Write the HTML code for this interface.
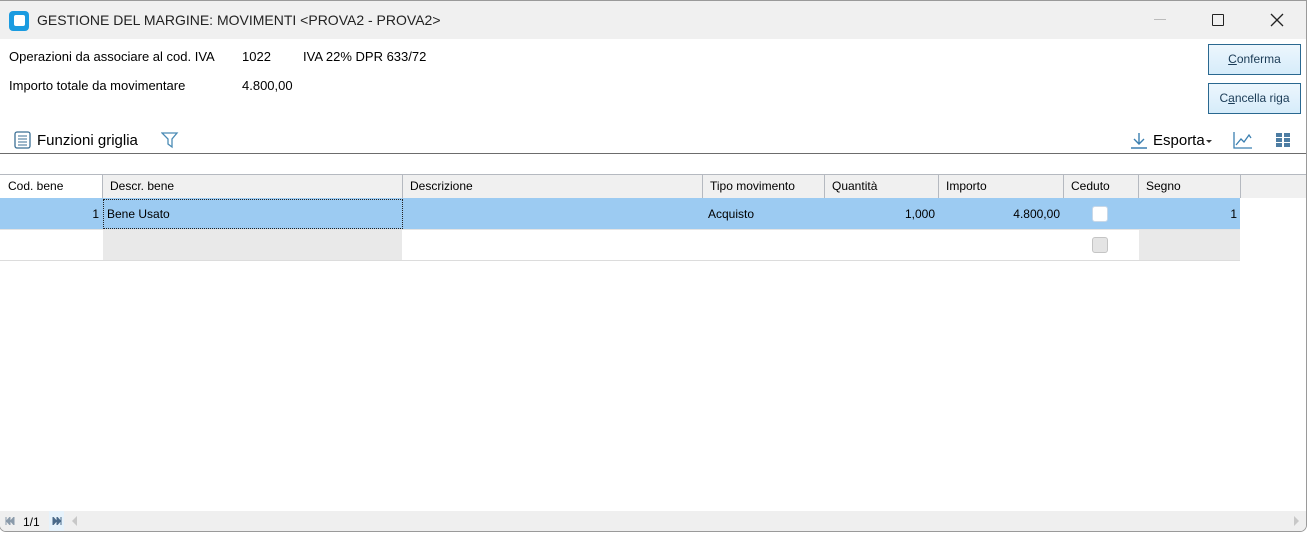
<!DOCTYPE html>
<html><head><meta charset="utf-8"><style>
*{margin:0;padding:0;box-sizing:border-box}
body{width:1308px;height:533px;background:#fff;font-family:"Liberation Sans","DejaVu Sans",sans-serif;position:relative;overflow:hidden}
.win{position:absolute;left:-1px;top:0;width:1308px;height:532px;border:1px solid #9a9a9a;border-radius:0 0 7px 7px;background:#fff;overflow:hidden}
.title{position:absolute;left:0;top:0;width:100%;height:38px;background:#f0f0f0}
.t{position:absolute;font-size:12px;color:#000;white-space:nowrap}
.btn{position:absolute;left:1208px;width:93px;height:31px;border:1px solid #2a6890;background:linear-gradient(#ecf6fd,#d6ecfa);font-size:12px;text-align:center;line-height:29px;color:#1a3b56}
.cell{position:absolute;font-size:12px;line-height:24px;padding:0 5px;white-space:nowrap}
.vl{position:absolute;width:1px;background:#b5b9c0}
</style></head><body>
<div class="win">
<div class="title">
 <div style="position:absolute;left:9px;top:10px;width:20px;height:20px;border-radius:4px;background:#1a9be0"></div>
 <div style="position:absolute;left:14px;top:14px;width:11px;height:11px;border-radius:2px;background:#fff"></div>
 <div class="t" style="left:37px;top:11px;font-size:14px;color:#222">GESTIONE DEL MARGINE: MOVIMENTI &lt;PROVA2 - PROVA2&gt;</div>
 <div style="position:absolute;left:1154px;top:18px;width:12px;height:1px;background:#bbb"></div>
 <div style="position:absolute;left:1212px;top:13px;width:12px;height:12px;border:1.5px solid #222;border-radius:1px"></div>
 <svg style="position:absolute;left:1270px;top:12px" width="14" height="14"><path d="M1 1L13 13M13 1L1 13" stroke="#222" stroke-width="1.3"/></svg>
</div>
<div class="t" style="left:9px;top:48px;font-size:13px">Operazioni da associare al cod. IVA</div>
<div class="t" style="left:242px;top:48px;font-size:13px">1022</div>
<div class="t" style="left:303px;top:48px;font-size:13px">IVA 22% DPR 633/72</div>
<div class="t" style="left:9px;top:77px;font-size:13px">Importo totale da movimentare</div>
<div class="t" style="left:242px;top:77px;font-size:13px">4.800,00</div>
<div class="btn" style="top:43px"><u>C</u>onferma</div>
<div class="btn" style="top:82px">C<u>a</u>ncella riga</div>
<svg style="position:absolute;left:14px;top:130px" width="18" height="18"><rect x="1" y="1" width="15" height="16" rx="2" fill="none" stroke="#3b6f95" stroke-width="1.3"/><path d="M4 5h9M4 8h9M4 11h9M4 14h9" stroke="#3b6f95"/></svg>
<div class="t" style="left:37px;top:131px;font-size:15px">Funzioni griglia</div>
<svg style="position:absolute;left:161px;top:130px" width="18" height="18"><path d="M1 2h15l-5 6v8l-4-3v-5z" fill="none" stroke="#4a8bb5" stroke-width="1.3"/></svg>
<svg style="position:absolute;left:1130px;top:131px" width="18" height="17"><path d="M9 1v11M4 7l5 5 5-5M1 16h16" fill="none" stroke="#3b7fb0" stroke-width="1.4"/></svg>
<div class="t" style="left:1153px;top:131px;font-size:15px">Esporta</div>
<div style="position:absolute;left:1206px;top:139px;border:3px solid transparent;border-top:3px solid #333"></div>
<svg style="position:absolute;left:1233px;top:130px" width="20" height="18"><path d="M1 1v16h18M3 14l5-6 3 3 5-7 2 3" fill="none" stroke="#3b7fb0" stroke-width="1.3"/></svg>
<svg style="position:absolute;left:1276px;top:132px" width="15" height="14"><g fill="#4d7da3"><rect x="0" y="0" width="6" height="4"/><rect x="8" y="0" width="6" height="4"/><rect x="0" y="5" width="6" height="4"/><rect x="8" y="5" width="6" height="4"/><rect x="0" y="10" width="6" height="4"/><rect x="8" y="10" width="6" height="4"/></g></svg>
<div style="position:absolute;left:0;top:152px;width:1306px;height:1px;background:#6c6c6c"></div>
<div style="position:absolute;left:0;top:173px;width:1306px;height:1px;background:#b5b9c0"></div>
<div style="position:absolute;left:0;top:174px;width:1306px;height:23px;background:#f0f0f0"></div>
<div style="position:absolute;left:0;top:174px;width:102px;height:23px;background:#fff"></div>
<div style="position:absolute;left:0;top:197px;width:1240px;height:31px;background:#9ccbf2"></div>
<div style="position:absolute;left:103px;top:229px;width:299px;height:30px;background:#e9e9e9"></div>
<div style="position:absolute;left:1139px;top:229px;width:101px;height:30px;background:#e9e9e9"></div>
<div style="position:absolute;left:0;top:259px;width:1240px;height:1px;background:#dcdcdc"></div>
<div style="position:absolute;left:0;top:228px;width:1240px;height:1px;background:#e4e4e4"></div>
<div style="position:absolute;left:103px;top:198px;width:300px;height:30px;border:1px dotted #222"></div>
<div class="vl" style="left:102px;top:174px;height:23px"></div>
<div class="vl" style="left:402px;top:174px;height:23px"></div>
<div class="vl" style="left:702px;top:174px;height:23px"></div>
<div class="vl" style="left:824px;top:174px;height:23px"></div>
<div class="vl" style="left:938px;top:174px;height:23px"></div>
<div class="vl" style="left:1063px;top:174px;height:23px"></div>
<div class="vl" style="left:1138px;top:174px;height:23px"></div>
<div class="vl" style="left:1240px;top:174px;height:23px"></div>
<div class="cell" style="left:3px;top:173px">Cod. bene</div>
<div class="cell" style="left:105px;top:173px">Descr. bene</div>
<div class="cell" style="left:405px;top:173px">Descrizione</div>
<div class="cell" style="left:705px;top:173px">Tipo movimento</div>
<div class="cell" style="left:827px;top:173px">Quantità</div>
<div class="cell" style="left:941px;top:173px">Importo</div>
<div class="cell" style="left:1066px;top:173px">Ceduto</div>
<div class="cell" style="left:1141px;top:173px">Segno</div>
<div class="cell" style="left:0;width:102px;text-align:right;top:201px;padding-right:3px">1</div>
<div class="cell" style="left:103px;top:201px;padding-left:4px">Bene Usato</div>
<div class="cell" style="left:703px;top:201px">Acquisto</div>
<div class="cell" style="left:825px;width:113px;text-align:right;top:201px;padding-right:3px">1,000</div>
<div class="cell" style="left:939px;width:124px;text-align:right;top:201px;padding-right:3px">4.800,00</div>
<div class="cell" style="left:1139px;width:101px;text-align:right;top:201px;padding-right:3px">1</div>
<div style="position:absolute;left:1092px;top:205px;width:16px;height:16px;border-radius:3px;background:#fff;border:1px solid #c8d8e8"></div>
<div style="position:absolute;left:1092px;top:236px;width:16px;height:16px;border-radius:3px;background:#e4e4e4;border:1px solid #c4c4c4"></div>
<div style="position:absolute;left:0;top:510px;width:1306px;height:20px;background:#efefef"></div>
<div style="position:absolute;left:49px;top:510px;width:15px;height:20px;background:#e6f2fb"></div>
<svg style="position:absolute;left:5px;top:516px" width="10" height="8"><path d="M1 0v8M5 0L1.5 4 5 8zM9 0L5.5 4 9 8z" fill="#8a9aaa" stroke="#8a9aaa" stroke-width="1"/></svg>
<div class="t" style="left:23px;top:514px">1/1</div>
<svg style="position:absolute;left:52px;top:516px" width="10" height="8"><path d="M9 0v8M5 0L8.5 4 5 8zM1 0L4.5 4 1 8z" fill="#4a6a8a" stroke="#4a6a8a" stroke-width="1"/></svg>
<div style="position:absolute;left:72px;top:515px;border:5px solid transparent;border-right:5px solid #c8c8c8;border-left:0"></div>
<div style="position:absolute;left:1294px;top:515px;border:5px solid transparent;border-left:5px solid #c8c8c8;border-right:0"></div>
</div>
</body></html>
